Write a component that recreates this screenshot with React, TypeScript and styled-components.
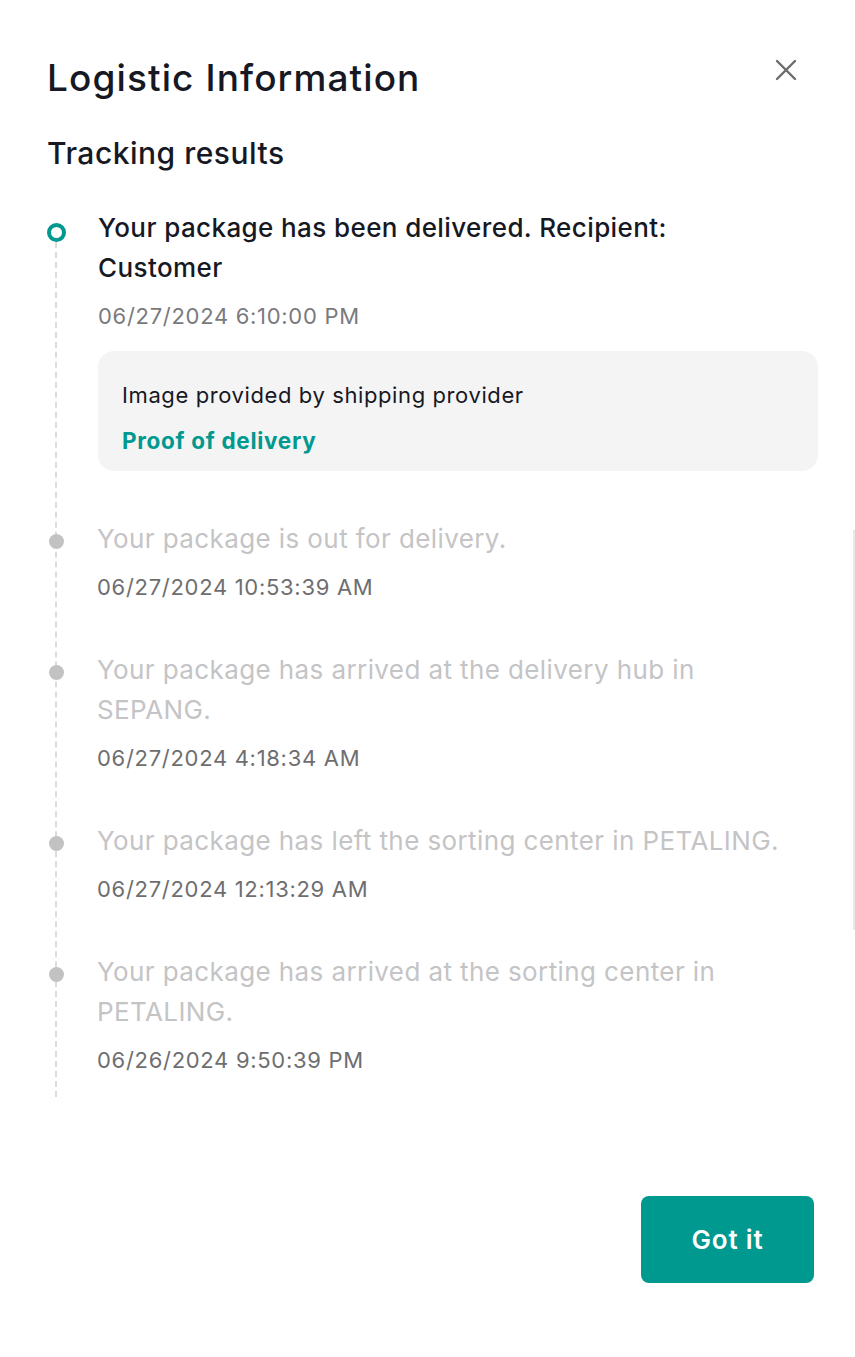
import React from "react";
import styled, { createGlobalStyle } from "styled-components";

const Global = createGlobalStyle`
  html, body { margin: 0; padding: 0; background: #fff; }
  body { font-family: Inter, "Noto Sans", sans-serif; color: #161823; }
  * { box-sizing: border-box; }
`;

const Panel = styled.div`
  position: relative;
  width: 855px;
  min-height: 1357px;
  padding: 56px 37px 0 47px;
  display: flex;
  flex-direction: column;
`;

const Header = styled.div`
  display: flex;
  justify-content: space-between;
  align-items: flex-start;
`;

const Title = styled.h1`
  margin: 0;
  font-size: 37px;
  line-height: 44px;
  font-weight: 500;
  letter-spacing: 1.1px;
  color: #161823;
`;

const CloseButton = styled.button`
  border: 0;
  background: none;
  padding: 0;
  margin: 2px 20px 0 0;
  width: 24px;
  height: 24px;
  display: flex;
  align-items: center;
  justify-content: center;
  cursor: pointer;
`;

const Subtitle = styled.h2`
  margin: 35px 0 0;
  font-size: 30px;
  line-height: 36px;
  font-weight: 500;
  letter-spacing: 0.5px;
  color: #161823;
`;

const Timeline = styled.ol`
  position: relative;
  list-style: none;
  margin: 37px 0 0;
  padding: 0 0 22px;
  display: flex;
  flex-direction: column;
  gap: 48px;
  &::before {
    content: "";
    position: absolute;
    left: 8px;
    top: 34px;
    bottom: 0;
    border-left: 2px dashed #dcdcdc;
  }
`;

const Item = styled.li`
  display: grid;
  grid-template-columns: 51px 1fr;
  position: relative;
`;

const DotCol = styled.div`
  display: flex;
  justify-content: flex-start;
  padding-top: 16px;
`;

const Dot = styled.span<{ $active?: boolean }>`
  position: relative;
  z-index: 1;
  display: block;
  width: ${(p) => (p.$active ? 19 : 15)}px;
  height: ${(p) => (p.$active ? 19 : 15)}px;
  margin-left: ${(p) => (p.$active ? 0 : 2)}px;
  margin-top: -1px;
  border-radius: 50%;
  background: ${(p) => (p.$active ? "#fff" : "#c2c2c2")};
  border: ${(p) => (p.$active ? "4px solid #009990" : "0")};
`;

const Body = styled.div<{ $active?: boolean }>`
  display: flex;
  flex-direction: column;
  margin-left: ${(p) => (p.$active ? 0 : -1)}px;
`;

const Message = styled.div<{ $active?: boolean }>`
  max-width: 700px;
  font-size: 26px;
  line-height: 40px;
  letter-spacing: 0.4px;
  font-weight: ${(p) => (p.$active ? 500 : 400)};
  color: ${(p) => (p.$active ? "#161823" : "#c4c4c6")};
`;

const Time = styled.div<{ $active?: boolean }>`
  margin-top: 13px;
  font-size: 22px;
  line-height: 30px;
  letter-spacing: 0.7px;
  color: ${(p) => (p.$active ? "#7a7a7d" : "#6e6e70")};
`;

const ProofBox = styled.div`
  margin-top: 20px;
  background: #f4f4f4;
  border-radius: 16px;
  padding: 29px 24px 15px;
  display: flex;
  flex-direction: column;
  gap: 16px;
`;

const ProofNote = styled.div`
  font-size: 22px;
  line-height: 30px;
  letter-spacing: 0.6px;
  color: #161823;
`;

const ProofLink = styled.a`
  font-size: 22.5px;
  line-height: 30px;
  font-weight: 700;
  letter-spacing: 0.7px;
  color: #009990;
  text-decoration: none;
  cursor: pointer;
`;

const Footer = styled.div`
  display: flex;
  justify-content: flex-end;
  margin-top: 99px;
  padding-right: 4px;
`;

const PrimaryButton = styled.button`
  width: 173px;
  height: 87px;
  border: 0;
  border-radius: 8px;
  background: #009990;
  color: #fff;
  font-family: Inter, "Noto Sans", sans-serif;
  font-size: 26px;
  font-weight: 600;
  letter-spacing: 0.8px;
  cursor: pointer;
`;

const ScrollThumb = styled.div`
  position: absolute;
  right: 0;
  top: 530px;
  width: 2px;
  height: 400px;
  background: #e8e8e8;
`;

type Event = { text: string; time: string; active?: boolean; proof?: boolean };

const events: Event[] = [
  {
    text: "Your package has been delivered. Recipient: Customer",
    time: "06/27/2024 6:10:00 PM",
    active: true,
    proof: true,
  },
  { text: "Your package is out for delivery.", time: "06/27/2024 10:53:39 AM" },
  {
    text: "Your package has arrived at the delivery hub in SEPANG.",
    time: "06/27/2024 4:18:34 AM",
  },
  {
    text: "Your package has left the sorting center in PETALING.",
    time: "06/27/2024 12:13:29 AM",
  },
  {
    text: "Your package has arrived at the sorting center in PETALING.",
    time: "06/26/2024 9:50:39 PM",
  },
];

export default function App() {
  return (
    <>
      <Global />
      <Panel>
        <Header>
          <Title>Logistic Information</Title>
          <CloseButton aria-label="Close">
            <svg width="22" height="22" viewBox="0 0 22 22" fill="none">
              <path
                d="M2 2L20 20M20 2L2 20"
                stroke="#6b6b6b"
                strokeWidth="2.4"
                strokeLinecap="round"
              />
            </svg>
          </CloseButton>
        </Header>
        <Subtitle>Tracking results</Subtitle>
        <Timeline>
          {events.map((e, i) => (
            <Item key={i}>
              <DotCol>
                <Dot $active={e.active} />
              </DotCol>
              <Body $active={e.active}>
                <Message $active={e.active}>{e.text}</Message>
                <Time $active={e.active}>{e.time}</Time>
                {e.proof && (
                  <ProofBox>
                    <ProofNote>Image provided by shipping provider</ProofNote>
                    <ProofLink>Proof of delivery</ProofLink>
                  </ProofBox>
                )}
              </Body>
            </Item>
          ))}
        </Timeline>
        <Footer>
          <PrimaryButton>Got it</PrimaryButton>
        </Footer>
        <ScrollThumb />
      </Panel>
    </>
  );
}
